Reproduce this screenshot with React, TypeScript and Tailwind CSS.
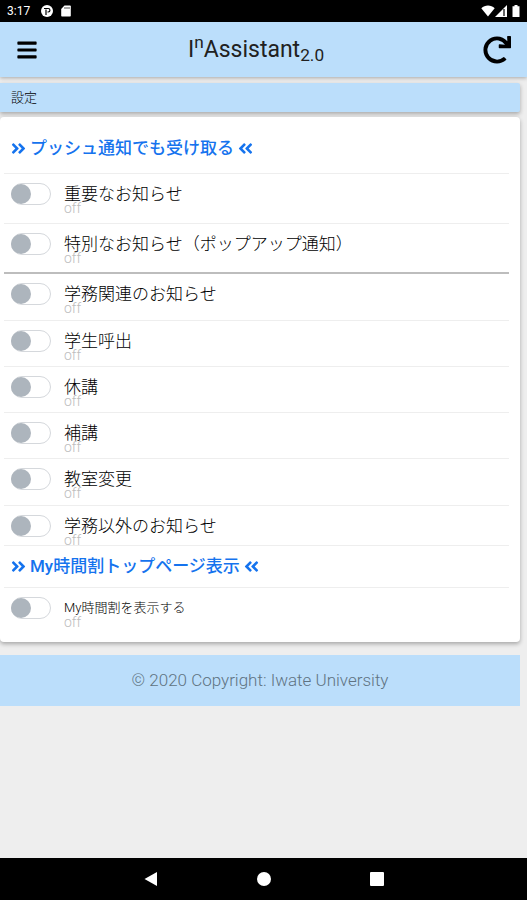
import { useState } from "react";
import type { ReactNode } from "react";
import { FaAngleDoubleLeft, FaAngleDoubleRight, FaBars, FaRedo } from "react-icons/fa";

type Setting = { id: string; label: string; row: string; text: string };

const pushSettings: Setting[] = [
  { id: "important", label: "重要なお知らせ", row: "h-[50px] border-b border-[#eeeeee]", text: "text-[17px]" },
  { id: "special", label: "特別なお知らせ（ポップアップ通知）", row: "h-[50px] border-b-2 border-[#bdbdbd]", text: "text-[17px]" },
  { id: "academic", label: "学務関連のお知らせ", row: "h-[47px] border-b border-[#eeeeee]", text: "text-[17px]" },
  { id: "call", label: "学生呼出", row: "h-[46px] border-b border-[#eeeeee]", text: "text-[17px]" },
  { id: "cancel", label: "休講", row: "h-[46px] border-b border-[#eeeeee]", text: "text-[17px]" },
  { id: "makeup", label: "補講", row: "h-[46px] border-b border-[#eeeeee]", text: "text-[17px]" },
  { id: "room", label: "教室変更", row: "h-[47px] border-b border-[#eeeeee]", text: "text-[17px]" },
  { id: "other", label: "学務以外のお知らせ", row: "h-[40px] border-b border-[#eeeeee]", text: "text-[17px]" },
];

const timetableSetting: Setting = {
  id: "timetable",
  label: "My時間割を表示する",
  row: "h-[54px]",
  text: "text-[13px]",
};

function StatusBar() {
  return (
    <div className="flex h-[22px] items-center bg-black px-[7px] text-xs text-white">
      <span className="w-6">3:17</span>
      <svg className="ml-[10px] h-3 w-3" viewBox="0 0 12 12">
        <circle cx="6" cy="6" r="6" fill="#fff" />
        <path d="M5 10V4.500M3 3.500h4.200a1.700 1.700 0 0 1 0 3.500H6.500" fill="none" stroke="#000" strokeWidth="1.2" />
      </svg>
      <svg className="ml-2 h-3 w-[10px]" viewBox="0 0 10 12">
        <path d="M3.5 0.5H9a.8.8 0 0 1 .8.8v9.4a.8.8 0 0 1-.8.8H1a.8.8 0 0 1-.8-.8V4z" fill="#fff" />
        <path d="M4 2v2M6 2v2M8 2v2" stroke="#000" strokeWidth=".7" />
      </svg>
      <svg className="ml-auto h-3 w-[14px]" viewBox="0 0 14 12">
        <path d="M7 11.5L.3 3.3C2.2 1.4 4.5.6 7 .6s4.8.8 6.7 2.7z" fill="#fff" />
      </svg>
      <svg className="h-3 w-3" viewBox="0 0 12 12">
        <path d="M12 0v12H0z" fill="#fff" />
        <path d="M9 4v7" stroke="#000" strokeWidth="1.2" />
      </svg>
      <svg className="ml-[5px] h-3 w-2" viewBox="0 0 8 12">
        <path d="M2.5 0h3v1.2h2V12h-7V1.2h2z" fill="#fff" />
      </svg>
    </div>
  );
}

function SettingRow({ setting }: { setting: Setting }) {
  const [on, setOn] = useState(false);

  return (
    <li className={`flex items-start gap-[13px] pt-[9px] pl-[7px] ${setting.row}`}>
      <input
        id={setting.id}
        type="checkbox"
        checked={on}
        onChange={(e) => setOn(e.target.checked)}
        className="flex h-[22px] w-10 shrink-0 appearance-none items-center rounded-full border border-[#d5d8dc] bg-white before:-ml-px before:block before:h-5 before:w-5 before:rounded-full before:bg-[#adb5bd] checked:justify-end checked:border-[#1a73e8] checked:before:bg-[#1a73e8]"
      />
      <label htmlFor={setting.id} className="flex flex-col pt-[3px] font-light text-black">
        <span className={`leading-4 ${setting.text}`}>{setting.label}</span>
        <span className="text-sm leading-3 text-[#bdbdbd]">{on ? "on" : "off"}</span>
      </label>
    </li>
  );
}

function SectionTitle({ children }: { children: ReactNode }) {
  return (
    <h2 className="flex items-center gap-1 pl-[7px] text-[17px] leading-6 font-medium text-[#1573ee]">
      <FaAngleDoubleRight className="h-[17px] w-[15px]" />
      {children}
      <FaAngleDoubleLeft className="h-[17px] w-[15px]" />
    </h2>
  );
}

export default function App() {
  return (
    <div className="flex min-h-screen flex-col bg-[#eeeeee] font-['Roboto','Noto_Sans_CJK_JP',sans-serif] text-[#212121]">
      <StatusBar />

      <header className="flex h-[55px] items-center justify-between bg-[#bbdefb] pr-4 pl-[17px] text-black shadow-[0_1px_4px_rgba(0,0,0,0.3)]">
        <button type="button" aria-label="メニュー">
          <FaBars className="h-[22px] w-5" />
        </button>
        <h1 className="pr-2 text-[23px] leading-8 font-normal text-[#212121]">
          I<sup>n</sup>Assistant<sub>2.0</sub>
        </h1>
        <button type="button" aria-label="更新">
          <FaRedo className="h-7 w-7" />
        </button>
      </header>

      <main className="mr-[7px] pt-[6px]">
        <div className="rounded-r-xs bg-[#bbdefb] px-[11px] py-1 text-[13px] leading-[21px] font-light text-black shadow-[0_2px_4px_rgba(0,0,0,0.3)]">
          設定
        </div>

        <section className="mt-[5px] rounded-sm bg-white pr-[11px] pl-1 shadow-[0_2px_4px_rgba(0,0,0,0.3)]">
          <div className="border-b border-[#eeeeee] pt-[19px] pb-[13px]">
            <SectionTitle>プッシュ通知でも受け取る</SectionTitle>
          </div>
          <ul>
            {pushSettings.map((setting) => (
              <SettingRow key={setting.id} setting={setting} />
            ))}
          </ul>
          <div className="border-b border-[#eeeeee] pt-2 pb-[9px]">
            <SectionTitle>My時間割トップページ表示</SectionTitle>
          </div>
          <ul>
            <SettingRow setting={timetableSetting} />
          </ul>
        </section>
      </main>

      <footer className="mt-[13px] mr-[7px] bg-[#bbdefb] py-[13px] text-center text-[17px] leading-[25px] font-light text-[#5f7382]">
        © 2020 Copyright: Iwate University
      </footer>

      <nav className="mt-auto flex h-[42px] items-center justify-center gap-[85px] bg-black">
        <button type="button" aria-label="戻る" className="flex w-7 justify-center">
          <svg className="h-[14px] w-[14px]" viewBox="0 0 14 14">
            <path d="M13 0v14L0.5 7z" fill="#fff" />
          </svg>
        </button>
        <button type="button" aria-label="ホーム" className="flex w-7 justify-center">
          <svg className="h-[14px] w-[14px]" viewBox="0 0 14 14">
            <circle cx="7" cy="7" r="7" fill="#fff" />
          </svg>
        </button>
        <button type="button" aria-label="アプリ一覧" className="flex w-7 justify-center">
          <svg className="h-[14px] w-[14px]" viewBox="0 0 14 14">
            <rect width="14" height="14" rx="1" fill="#fff" />
          </svg>
        </button>
      </nav>
    </div>
  );
}
